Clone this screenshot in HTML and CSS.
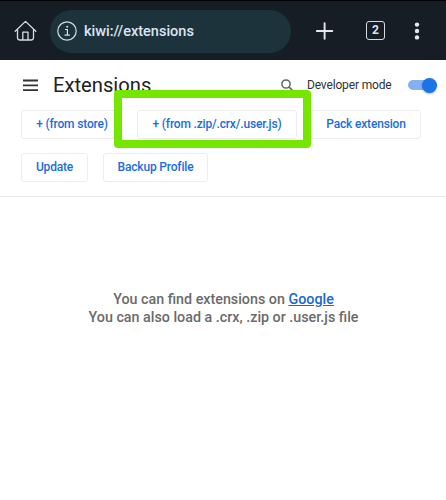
FILE: index.html
```html
<!DOCTYPE html>
<html lang="en">
<head>
<meta charset="utf-8">
<title>Extensions</title>
<link rel="stylesheet" href="styles.css">
</head>
<body>
<header class="browser-bar">
  <svg class="home" width="24" height="22" viewBox="0 0 24 22"><path d="M1.200 11.200 L11.500 1.400 L21.800 11.200 M3.500 9.200 V17.500 Q3.500 20 6 20 H17 Q19.500 20 19.500 17.500 V9.200 M8.800 20 V12.200 H14 V20"/></svg>
  <div class="address">
    <svg class="info" width="20" height="20" viewBox="0 0 20 20"><circle cx="10" cy="10" r="9.2"/><path d="M8 8.500 H10.400 V14 M7.500 14.200 H12.800"/><circle class="dot" cx="10.200" cy="5.700" r="1"/></svg>
    <span class="url">kiwi://extensions</span>
  </div>
  <svg class="plus" width="18" height="18" viewBox="0 0 18 18"><path d="M8.600 1.200 V16.800 M0.900 9 H16.300"/></svg>
  <div class="tabs">2</div>
  <svg class="more" width="6" height="18" viewBox="0 0 6 18"><circle cx="3" cy="2.600" r="2.200"/><circle cx="3" cy="9" r="2.200"/><circle cx="3" cy="15.400" r="2.200"/></svg>
</header>
<section class="toolbar">
  <div class="title-row">
    <svg class="menu" width="15" height="12" viewBox="0 0 15 12"><path d="M0 1.500 H15 M0 6.400 H15 M0 11.200 H15"/></svg>
    <h1>Extensions</h1>
    <svg class="search" width="13" height="13" viewBox="0 0 13 13"><circle cx="5" cy="5" r="4.100"/><path d="M7.900 7.900 L12 12"/></svg>
    <span class="mode">Developer mode</span>
    <div class="toggle"><div class="knob"></div></div>
  </div>
  <div class="buttons">
    <button class="store">+ (from store)</button>
    <button class="file">+ (from .zip/.crx/.user.js)</button>
    <button class="pack">Pack extension</button>
  </div>
  <div class="buttons">
    <button class="update">Update</button>
    <button class="backup">Backup Profile</button>
  </div>
  <div class="highlight"></div>
</section>
<main class="empty">
  <p class="find">You can find extensions on <a href="#">Google</a></p>
  <p class="load">You can also load a .crx, .zip or .user.js file</p>
</main>
</body>
</html>
```
FILE: styles.css
```css
* { box-sizing: border-box; }
body {
  margin: 0;
  height: 500px;
  overflow: hidden;
  background: #fff;
  font-family: Roboto, sans-serif;
}
svg { display: block; flex: none; fill: none; }
.browser-bar {
  display: flex;
  align-items: center;
  height: 60px;
  padding: 1px 0 0 14px;
  background: #171d25;
  border-top: 1px solid #020304;
  color: #dde3f3;
}
.home { stroke: #d5dbe8; stroke-width: 1.3; stroke-linejoin: round; stroke-linecap: round; }
.address {
  display: flex;
  align-items: center;
  width: 241px;
  height: 43px;
  margin-left: 12px;
  padding-left: 7px;
  border-radius: 22px;
  background: #1d333b;
}
.info { stroke: #d5dbe8; stroke-width: 1.2; }
.info .dot { fill: #d5dbe8; stroke: none; }
.url { margin-left: 7px; padding-top: 2px; font-size: 14.5px; font-weight: 500; line-height: 20px; white-space: nowrap; }
.plus { margin-left: 25px; stroke: #e3e8f4; stroke-width: 1.9; stroke-linecap: round; }
.tabs {
  width: 19px;
  height: 19px;
  margin: 0 0 1px 32px;
  border: 1.500px solid #d5dbe8;
  border-radius: 3px;
  font-size: 12px;
  font-weight: 700;
  line-height: 17px;
  text-align: center;
}
.more { margin-left: 29px; fill: #e3e8f4; }
.toolbar {
  position: relative;
  height: 137px;
  border-bottom: 1px solid #e9e9e9;
}
.title-row {
  display: flex;
  align-items: center;
  height: 50px;
  padding-left: 23px;
}
.menu { stroke: #303236; stroke-width: 1.8; }
h1 {
  width: 100px;
  margin: 0 0 0 15px;
  color: #202124;
  font-size: 20.2px;
  font-weight: 400;
  line-height: 26px;
  white-space: nowrap;
}
.search { margin-left: 128px; stroke: #5f6368; stroke-width: 1.500; }
.mode { width: 85px; margin-left: 13px; color: #303134; font-size: 12px; letter-spacing: -0.15px; white-space: nowrap; }
.toggle {
  display: flex;
  align-items: center;
  justify-content: flex-end;
  width: 27px;
  height: 10px;
  margin-left: 16px;
  border-radius: 5px;
  background: #83b1f3;
}
.knob {
  flex: none;
  width: 15px;
  height: 15px;
  margin-right: -2px;
  border-radius: 50%;
  background: #1a73e8;
  box-shadow: 0 1px 2px rgba(0, 0, 0, 0.3);
}
.buttons { display: flex; gap: 15px; height: 29px; padding-left: 21px; }
.buttons + .buttons { margin-top: 14px; }
button {
  height: 29px;
  padding: 0;
  border: 1px solid #ededef;
  border-radius: 3px;
  background: #fff;
  color: #1a6ddd;
  font: 500 12px/27px Roboto, sans-serif;
  letter-spacing: -0.17px;
  white-space: nowrap;
}
.store { width: 101px; padding-left: 1px; }
.file { width: 160px; }
.pack { width: 110px; margin-left: -1px; }
.update { width: 67px; }
.backup { width: 105px; }
.highlight {
  position: absolute;
  left: 114px;
  top: 30px;
  width: 197px;
  height: 58px;
  border: 8px solid #75e600;
  border-radius: 4px;
}
.empty {
  padding: 93px 0 0 1px;
  color: #6b6b6b;
  font-size: 14.3px;
  font-weight: 500;
  line-height: 18px;
  text-align: center;
}
.empty p { margin: 0; white-space: nowrap; }
.empty a { color: #1967d2; }
```
